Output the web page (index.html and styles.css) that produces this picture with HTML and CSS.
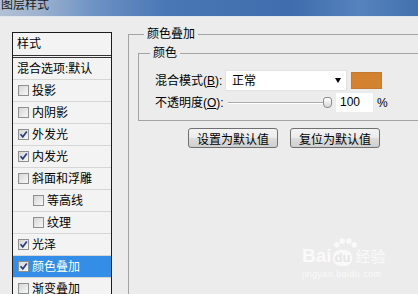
FILE: index.html
```html
<!DOCTYPE html>
<html lang="zh-CN">
<head>
    <meta charset="UTF-8">
    <meta name="viewport" content="width=device-width, initial-scale=1.0">
    <title>图层样式</title>
    <link rel="stylesheet" href="styles.css">
</head>
<body>
    <div class="titlebar"><span class="title">图层样式</span></div>

    <div class="dialog">
        <ul class="style-list">
            <li class="head">样式</li>
            <li class="blend">混合选项:默认</li>
            <li><span class="cb"></span>投影</li>
            <li><span class="cb"></span>内阴影</li>
            <li><span class="cb checked"><svg viewBox="0 0 9 9"><path d="M1.5 4.2 L3.8 6.8 L7.8 1.6"/></svg></span>外发光</li>
            <li><span class="cb checked"><svg viewBox="0 0 9 9"><path d="M1.5 4.2 L3.8 6.8 L7.8 1.6"/></svg></span>内发光</li>
            <li><span class="cb"></span>斜面和浮雕</li>
            <li class="sub"><span class="cb"></span>等高线</li>
            <li class="sub"><span class="cb"></span>纹理</li>
            <li><span class="cb checked"><svg viewBox="0 0 9 9"><path d="M1.5 4.2 L3.8 6.8 L7.8 1.6"/></svg></span>光泽</li>
            <li class="selected"><span class="cb checked"><svg viewBox="0 0 9 9"><path d="M1.5 4.2 L3.8 6.8 L7.8 1.6"/></svg></span>颜色叠加</li>
            <li><span class="cb"></span>渐变叠加</li>
        </ul>

        <div class="settings">
            <fieldset class="group outer">
                <legend>颜色叠加</legend>
                <fieldset class="group inner">
                    <legend>颜色</legend>
                    <div class="form-grid">
                        <label>混合模式(<u>B</u>):</label>
                        <div class="ctrl">
                            <div class="select">正常<span class="arrow"></span></div>
                            <div class="swatch"></div>
                        </div>
                        <label>不透明度(<u>O</u>):</label>
                        <div class="ctrl">
                            <div class="slider"><span class="track"></span><span class="knob"></span></div>
                            <div class="num">100</div>
                            <span class="pct">%</span>
                        </div>
                    </div>
                </fieldset>
                <div class="buttons">
                    <button>设置为默认值</button>
                    <button>复位为默认值</button>
                </div>
            </fieldset>
        </div>
    </div>

    <div class="watermark">
        <div class="wm-logo">
            <span>Bai</span>
            <span class="wm-du">
                <svg class="paw" viewBox="0 0 28 12"><circle cx="4" cy="8" r="3"/><circle cx="10" cy="4" r="3"/><circle cx="17" cy="4" r="3"/><circle cx="23" cy="8" r="3"/></svg>
                du
            </span>
            <span class="wm-cn">经验</span>
        </div>
        <div class="wm-url">jingyan.baidu.com</div>
    </div>
</body>
</html>
```

FILE: styles.css
```css
html, body {
    margin: 0;
    height: 100%;
    overflow: hidden;
}
body {
    background: #ececec;
    font-family: "Liberation Sans", "Noto Sans CJK SC", sans-serif;
    font-size: 12px;
    line-height: 16px;
    color: #000;
    position: relative;
}

/* window title */
.titlebar {
    height: 16px;
    overflow: hidden;
    border-bottom: 1px solid #dfe5ee;
    background: linear-gradient(90deg, #b3c1d4 0, #9fb3cf 9%, #6e93c4 22%, #4977b5 40%, #3f6dad 70%, #5683bd 86%, #4371ae 100%);
}
.title {
    display: block;
    margin: -3px 0 0 1px;
    font-size: 12px;
    color: #1a1a1a;
}

.dialog {
    display: flex;
    align-items: flex-start;
    padding-top: 9px;
}

/* left list */
.style-list {
    list-style: none;
    margin: 6px 0 0 12px;
    padding: 0;
    width: 98px;
    flex: none;
    border: 1px solid #1c1c1c;
    background: #f3f3f3;
}
.style-list li {
    height: 21px;
    display: flex;
    align-items: center;
    padding-left: 5px;
    border-bottom: 1px solid #d6d6d6;
    white-space: nowrap;
}
.style-list li.head {
    height: 22px;
    padding-left: 4px;
    border-bottom: 3px double #333;
}
.style-list li.blend {
    padding-left: 4px;
}
.style-list li.sub {
    padding-left: 20px;
}
.style-list li.selected {
    background: #348de6;
    color: #fff;
}
.cb {
    width: 9px;
    height: 9px;
    margin-right: 3px;
    border: 1px solid #8e8f8f;
    background: linear-gradient(135deg, #d6d6d6, #f8f8f8);
    flex: none;
}
.cb svg {
    display: block;
    width: 9px;
    height: 9px;
}
.cb path {
    fill: none;
    stroke: #263c86;
    stroke-width: 1.7;
}

/* right settings */
.settings {
    margin-left: 16px;
    width: 330px;
    flex: none;
}
.group {
    margin: 0;
    border: 1px solid #a3a3a3;
    min-width: 0;
}
.group legend {
    padding: 0 3px;
    line-height: 16px;
}
.outer {
    height: 290px;
    padding: 3px 0 0 9px;
}
.outer > legend {
    margin-left: 6px;
}
.inner {
    padding: 9px 0 8px 11px;
}
.form-grid {
    display: grid;
    grid-template-columns: 70px auto;
    row-gap: 2px;
    align-items: center;
    padding-left: 5px;
}
.ctrl {
    display: flex;
    align-items: center;
}
.select {
    width: 122px;
    height: 21px;
    box-sizing: border-box;
    display: flex;
    align-items: center;
    justify-content: space-between;
    padding: 0 5px 0 6px;
    background: #fff;
    border: 1px solid #e2e2e2;
}
.arrow {
    width: 0;
    height: 0;
    border-top: 5px solid #000;
    border-left: 3px solid transparent;
    border-right: 3px solid transparent;
}
.swatch {
    width: 31px;
    height: 17px;
    margin-left: 4px;
    box-sizing: border-box;
    background: #d3822f;
    border: 1px solid #c57a33;
}
.slider {
    position: relative;
    width: 104px;
    height: 19px;
    margin-left: 3px;
}
.track {
    position: absolute;
    left: 0;
    right: 5px;
    top: 9px;
    height: 1px;
    background: #a9a9a9;
    border-bottom: 1px solid #fff;
}
.knob {
    position: absolute;
    right: 0;
    top: 4px;
    width: 7px;
    height: 9px;
    border: 1px solid #8c8c8c;
    border-radius: 3px 3px 4px 4px;
    background: linear-gradient(#fff, #d8d8d8);
}
.num {
    width: 37px;
    height: 19px;
    margin-left: 4px;
    box-sizing: border-box;
    padding-left: 4px;
    background: #fff;
    line-height: 19px;
}
.pct {
    margin-left: 4px;
}
.buttons {
    display: flex;
    gap: 12px;
    margin-top: 7px;
    padding-left: 50px;
}
.buttons button {
    width: 90px;
    height: 20px;
    padding: 0;
    font-family: inherit;
    font-size: 12px;
    color: #000;
    border: 1px solid #707070;
    border-radius: 3px;
    background: linear-gradient(#f3f3f3, #ebebeb 50%, #dddddd 51%, #cfcfcf);
}

/* baidu watermark */
.watermark {
    position: absolute;
    left: 302px;
    top: 238px;
    color: #fafafa;
}
.wm-logo {
    display: flex;
    align-items: flex-end;
    gap: 1px;
    font-size: 19px;
    font-weight: bold;
    line-height: 20px;
}
.wm-du {
    position: relative;
    display: inline-block;
    padding: 0 2px;
    margin-top: 12px;
    font-size: 13px;
    line-height: 16px;
    color: #e6e6e6;
    background: #f9f9f9;
    border-radius: 7px;
}
.paw {
    position: absolute;
    left: 0;
    top: -13px;
    width: 26px;
    height: 12px;
    fill: #f9f9f9;
}
.wm-cn {
    font-size: 15px;
    font-weight: normal;
    font-family: "Noto Sans CJK SC", sans-serif;
    margin-left: 2px;
}
.wm-url {
    font-size: 9px;
    line-height: 12px;
    margin-top: 2px;
    letter-spacing: 0.4px;
}
```
